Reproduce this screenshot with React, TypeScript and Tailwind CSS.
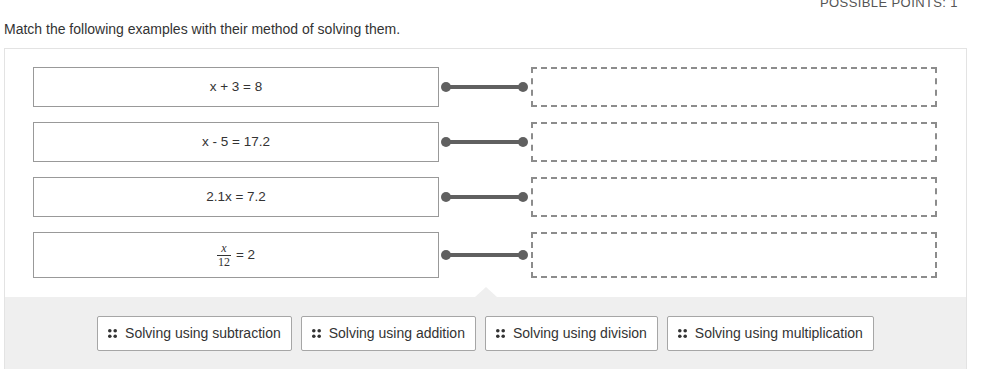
const rows = [
  { key: "a", label: "x + 3 = 8" },
  { key: "b", label: "x - 5 = 17.2" },
  { key: "c", label: "2.1x = 7.2" },
  { key: "d", label: "frac" },
];

const answers = [
  "Solving using subtraction",
  "Solving using addition",
  "Solving using division",
  "Solving using multiplication",
];

function DragDots() {
  return (
    <svg width="9" height="9" viewBox="0 0 9 9" className="shrink-0">
      <circle cx="1.8" cy="1.8" r="1.8" fill="#333" />
      <circle cx="7.2" cy="1.8" r="1.8" fill="#333" />
      <circle cx="1.8" cy="7.2" r="1.8" fill="#333" />
      <circle cx="7.2" cy="7.2" r="1.8" fill="#333" />
    </svg>
  );
}

function Fraction() {
  return (
    <span className="flex items-center gap-[5px]">
      <span className="flex flex-col items-center font-['Liberation_Serif',serif] text-[12px] leading-[13px]">
        <span className="italic">x</span>
        <span className="border-t border-[#333] px-[1px]">12</span>
      </span>
      <span>= 2</span>
    </span>
  );
}

export default function App() {
  return (
    <div className="h-[369px] w-[997px] overflow-hidden bg-white font-['Liberation_Sans',Arial,sans-serif] text-[#333]">
      <div className="-mt-[5px] flex h-[16px] justify-end pr-[39px] text-[13px] leading-[16px] tracking-[0.4px] text-[#555]">
        POSSIBLE POINTS: 1
      </div>
      <p className="mt-[10px] pl-[4px] text-[14px] leading-[16px] text-[#333]">
        Match the following examples with their method of solving them.
      </p>

      <div className="ml-[4px] mt-[11px] w-[963px] border border-[#e3e3e3]">
        <div className="flex flex-col gap-[15px] pb-[19px] pl-[28px] pr-[28px] pt-[18px]">
          {rows.map((row) => (
            <div key={row.key} className="flex items-stretch">
              <div
                className={`flex w-[406px] items-center justify-center border border-[#999] text-[13.5px] ${
                  row.key === "d" ? "h-[46px]" : "h-[40px]"
                }`}
              >
                {row.key === "d" ? <Fraction /> : row.label}
              </div>
              <div className="relative flex w-[92px] items-center">
                <div className="ml-[2px] h-[10px] w-[10px] rounded-full bg-[#606060]" />
                <div className="-mx-[3px] h-[4px] flex-1 bg-[#606060]" />
                <div className="mr-[3px] h-[10px] w-[10px] rounded-full bg-[#606060]" />
              </div>
              <div className="w-[406px] border-2 border-dashed border-[#8c8c8c]" />
            </div>
          ))}
        </div>

        <div className="relative flex h-[72px] justify-center gap-[9px] bg-[#efefef] pt-[19px]">
          <div className="absolute left-[470px] top-[-10px] h-0 w-0 border-b-[10px] border-l-[11px] border-r-[11px] border-b-[#efefef] border-l-transparent border-r-transparent" />
          {answers.map((a) => (
            <div
              key={a}
              className="flex h-[35px] items-center gap-[8px] rounded-[2px] border border-[#a6a6a6] bg-white px-[10px] text-[14px] text-[#333]"
            >
              <DragDots />
              <span>{a}</span>
            </div>
          ))}
        </div>
      </div>
    </div>
  );
}
